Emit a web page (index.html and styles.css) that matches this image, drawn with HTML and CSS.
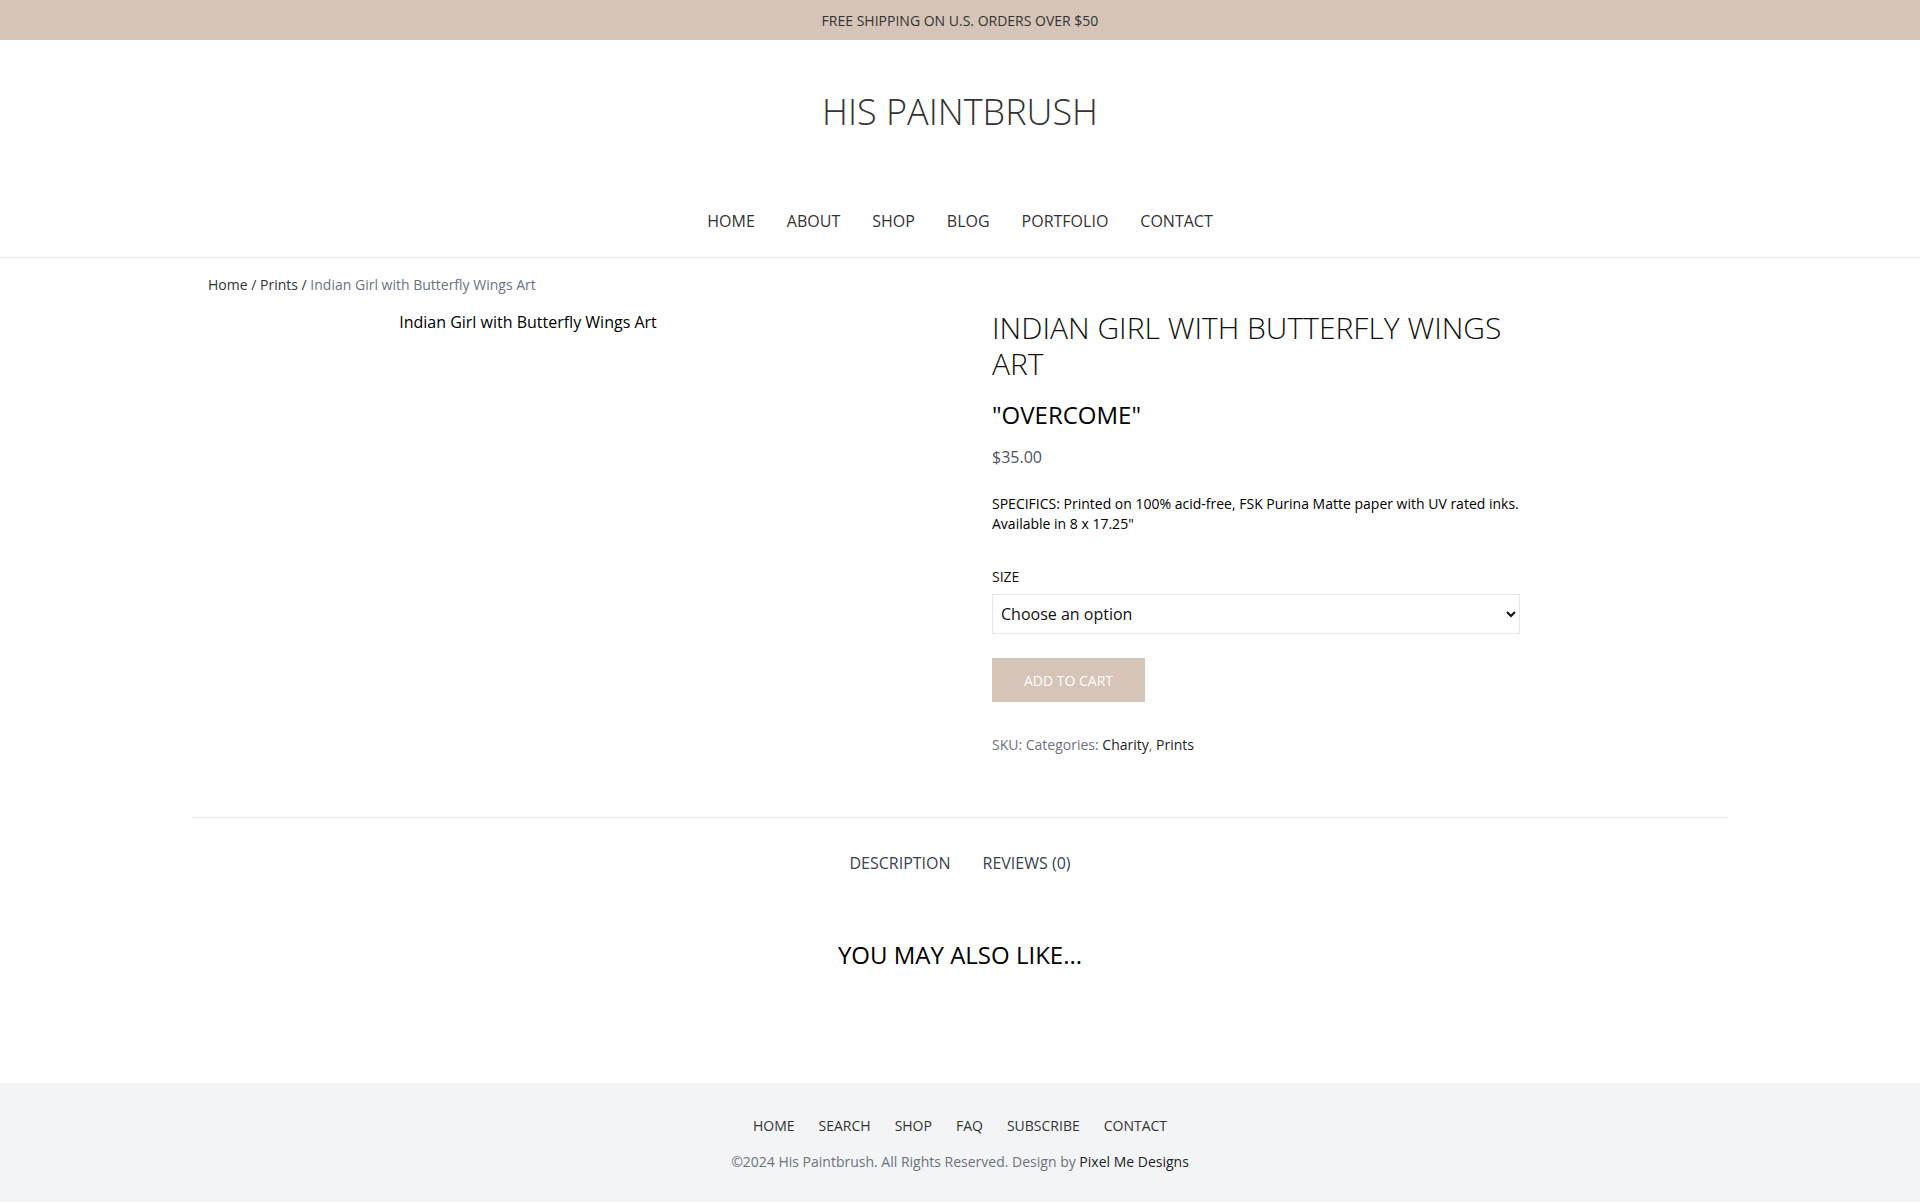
FILE: index.html
```html
<!DOCTYPE html>
<html lang="en">
<head>
<meta charset="utf-8">
<title>Indian Girl with Butterfly Wings Art – His Paintbrush</title>
<link rel="stylesheet" href="styles.css">
</head>
<body>
<div class="topbar">FREE SHIPPING ON U.S. ORDERS OVER $50</div>
<header class="site-header">
  <div class="logo">HIS PAINTBRUSH</div>
  <nav class="main-nav">
    <a href="#">HOME</a>
    <a href="#">ABOUT</a>
    <a href="#">SHOP</a>
    <a href="#">BLOG</a>
    <a href="#">PORTFOLIO</a>
    <a href="#">CONTACT</a>
  </nav>
</header>
<main class="container">
  <div class="inner">
    <div class="breadcrumb"><a href="#">Home</a> / <a href="#">Prints</a> / <span class="current">Indian Girl with Butterfly Wings Art</span></div>
    <div class="product">
      <div class="gallery"><span class="alt-text">Indian Girl with Butterfly Wings Art</span></div>
      <div class="summary">
        <h1 class="product-title">INDIAN GIRL WITH BUTTERFLY WINGS ART</h1>
        <h2 class="subtitle">"OVERCOME"</h2>
        <p class="price">$35.00</p>
        <p class="desc">SPECIFICS: Printed on 100% acid-free, FSK Purina Matte paper with UV rated inks.<br>Available in 8 x 17.25"</p>
        <div class="variation">
          <label class="var-label" for="size">SIZE</label>
          <select id="size" class="var-select"><option>Choose an option</option><option>8 x 17.25"</option></select>
        </div>
        <button class="add-btn" type="button">ADD TO CART</button>
        <div class="meta">SKU: Categories: <a href="#">Charity</a>, <a href="#">Prints</a></div>
      </div>
    </div>
  </div>
  <div class="tabs">
    <a href="#">DESCRIPTION</a>
    <a href="#">REVIEWS (0)</a>
  </div>
  <h2 class="related-title">YOU MAY ALSO LIKE...</h2>
</main>
<footer class="site-footer">
  <nav class="footer-nav">
    <a href="#">HOME</a>
    <a href="#">SEARCH</a>
    <a href="#">SHOP</a>
    <a href="#">FAQ</a>
    <a href="#">SUBSCRIBE</a>
    <a href="#">CONTACT</a>
  </nav>
  <p class="copyright">©2024 His Paintbrush. All Rights Reserved. Design by <a href="#">Pixel Me Designs</a></p>
</footer>
</body>
</html>
```
FILE: styles.css
```css
* { box-sizing: border-box; }
html, body { margin: 0; padding: 0; }
body {
  font-family: "Open Sans", "Liberation Sans", sans-serif;
  color: #111;
  background: #fff;
}
a { color: inherit; text-decoration: none; }

.topbar {
  height: 40px;
  background: #d5c4b7;
  color: #333;
  font-size: 14px;
  display: flex;
  align-items: center;
  justify-content: center;
}

.site-header {
  padding-top: 48px;
  border-bottom: 1px solid #e5e7eb;
}
.logo {
  text-align: center;
  font-size: 36px;
  font-weight: 300;
  line-height: 48px;
  color: #333;
}
.main-nav {
  margin-top: 73px;
  padding-bottom: 24px;
  display: flex;
  justify-content: center;
  gap: 32px;
  font-size: 16px;
  line-height: 24px;
  color: #333;
}

.container {
  max-width: 1536px;
  margin: 0 auto;
}
.inner {
  padding: 17px 16px 0;
}
.breadcrumb {
  font-size: 14px;
  line-height: 20px;
  color: #333;
  margin-bottom: 3px;
}
.breadcrumb .current { color: #6b7280; }

.product {
  display: grid;
  grid-template-columns: 640px 528px;
  column-gap: 144px;
}
.gallery {
  padding-top: 12px;
  text-align: center;
  font-size: 16px;
  line-height: 24px;
  color: #000;
}
.summary { padding-top: 12px; }
.product-title {
  margin: 0;
  font-size: 30px;
  font-weight: 300;
  line-height: 36px;
  color: #111;
}
.subtitle {
  margin: 17px 0 0;
  font-size: 24px;
  font-weight: 400;
  line-height: 32px;
  color: #000;
}
.price {
  margin: 14px 0 0;
  font-size: 16px;
  line-height: 24px;
  color: #4b5563;
}
.desc {
  margin: 25px 0 0;
  font-size: 14px;
  line-height: 20px;
  color: #000;
}
.variation { margin-top: 33px; }
.var-label {
  display: block;
  font-size: 14px;
  line-height: 20px;
  color: #111;
  margin-bottom: 7px;
}
.var-select {
  display: block;
  width: 100%;
  height: 40px;
  padding: 0 4px;
  border: 1px solid #e5e7eb;
  border-radius: 0;
  background: #fff;
  font-family: "Open Sans", "Liberation Sans", sans-serif;
  font-size: 16px;
  color: #111;
}
.add-btn {
  display: block;
  margin-top: 24px;
  height: 44px;
  padding: 0 32px;
  border: 0;
  background: #d5c4b7;
  color: #fff;
  font-family: "Open Sans", "Liberation Sans", sans-serif;
  font-size: 14px;
}
.meta {
  margin-top: 33px;
  font-size: 14px;
  line-height: 20px;
  color: #6b7280;
}
.meta a { color: #222; }

.tabs {
  margin-top: 62px;
  border-top: 1px solid #e5e7eb;
  padding-top: 33px;
  display: flex;
  justify-content: center;
  gap: 32px;
  font-size: 16px;
  line-height: 24px;
  color: #374151;
}
.related-title {
  margin: 64px 0 0;
  text-align: center;
  font-size: 24px;
  font-weight: 400;
  line-height: 32px;
  color: #000;
  padding-bottom: 112px;
}

.site-footer {
  background: #f3f4f6;
  padding: 33px 0 30px;
  text-align: center;
}
.footer-nav {
  display: flex;
  justify-content: center;
  gap: 24px;
  font-size: 14px;
  line-height: 20px;
  color: #333;
}
.copyright {
  margin: 16px 0 0;
  font-size: 14px;
  line-height: 20px;
  color: #6b7280;
}
.copyright a { color: #222; }
```
